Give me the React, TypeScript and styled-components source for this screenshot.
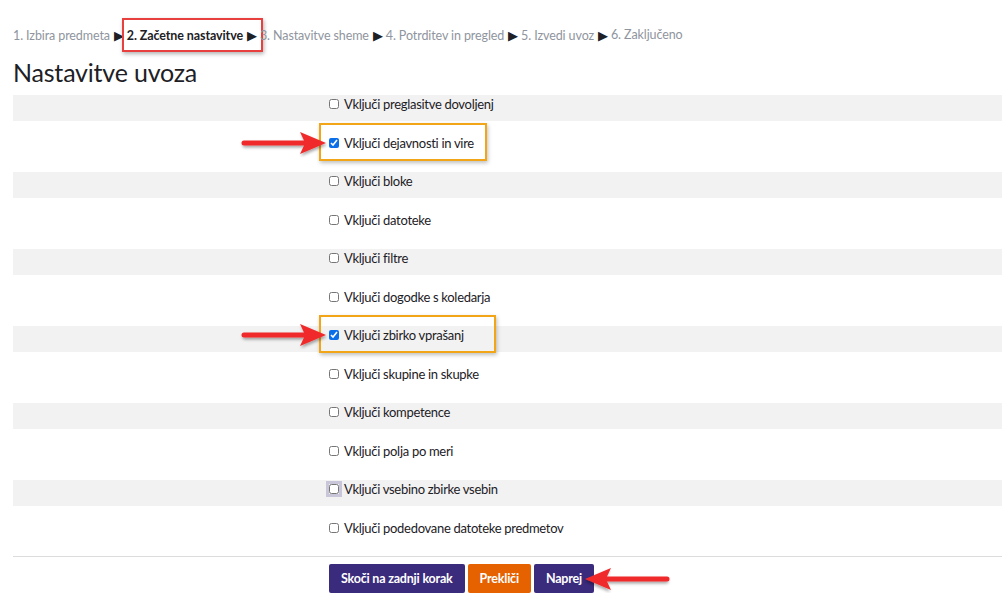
import React from 'react';
import styled, { createGlobalStyle } from 'styled-components';

const GlobalStyle = createGlobalStyle`
  body {
    margin: 0;
    background: #fff;
    font-family: Lato, "Noto Sans", sans-serif;
    color: #1d2125;
  }
`;

const STEPS = [
  { id: 1, label: '1. Izbira predmeta' },
  { id: 2, label: '2. Začetne nastavitve', active: true },
  { id: 3, label: '3. Nastavitve sheme' },
  { id: 4, label: '4. Potrditev in pregled' },
  { id: 5, label: '5. Izvedi uvoz' },
  { id: 6, label: '6. Zaključeno' },
];

const OPTIONS = [
  { id: 'permissions', label: 'Vključi preglasitve dovoljenj' },
  { id: 'activities', label: 'Vključi dejavnosti in vire', checked: true, mark: 168 },
  { id: 'blocks', label: 'Vključi bloke' },
  { id: 'files', label: 'Vključi datoteke' },
  { id: 'filters', label: 'Vključi filtre' },
  { id: 'calendar', label: 'Vključi dogodke s koledarja' },
  { id: 'questionbank', label: 'Vključi zbirko vprašanj', checked: true, mark: 177 },
  { id: 'groups', label: 'Vključi skupine in skupke' },
  { id: 'competencies', label: 'Vključi kompetence' },
  { id: 'customfield', label: 'Vključi polja po meri' },
  { id: 'contentbank', label: 'Vključi vsebino zbirke vsebin', focused: true },
  { id: 'legacyfiles', label: 'Vključi podedovane datoteke predmetov' },
];

const Arrow = ({ left }: { left?: boolean }) => (
  <ArrowSvg width="90" height="26" viewBox="0 0 90 26" $flip={left}>
    <defs>
      <filter id={left ? 'shl' : 'shr'} x="-20%" y="-40%" width="140%" height="180%">
        <feDropShadow dx="1" dy="2" stdDeviation="1.5" floodColor="#000" floodOpacity="0.35" />
      </filter>
    </defs>
    <path
      d="M4 10.5 H64 L60 2 L86 13 L60 24 L64 15.5 H4 Q1.5 15.5 1.5 13 Q1.5 10.5 4 10.5 Z"
      fill="#f02a2a"
      filter={`url(#${left ? 'shl' : 'shr'})`}
    />
  </ArrowSvg>
);

const App: React.FC = () => {
  return (
    <>
      <GlobalStyle />
      <Page>
        <Steps>
          {STEPS.map((step, i) => (
            <Step key={step.id} $active={step.active}>
              {step.label}
              {i < STEPS.length - 1 && <Triangle>▶</Triangle>}
              {step.active && <RedBox />}
            </Step>
          ))}
        </Steps>
        <Heading>Nastavitve uvoza</Heading>

        <Form>
          {OPTIONS.map((opt, i) => (
            <Row key={opt.id} $striped={i % 2 === 0}>
              <LabelCol />
              <Field>
                <Check type="checkbox" defaultChecked={opt.checked} $focused={opt.focused} id={opt.id} />
                <FieldLabel htmlFor={opt.id}>{opt.label}</FieldLabel>
                {opt.mark && (
                  <>
                    <OrangeBox style={{ width: opt.mark }} />
                    <RowArrow>
                      <Arrow />
                    </RowArrow>
                  </>
                )}
              </Field>
            </Row>
          ))}
        </Form>

        <Divider />

        <Actions>
          <LabelCol />
          <Buttons>
            <Button>Skoči na zadnji korak</Button>
            <Button $variant="cancel">Prekliči</Button>
            <NextWrap>
              <Button>Naprej</Button>
              <BackArrow>
                <Arrow left />
              </BackArrow>
            </NextWrap>
          </Buttons>
        </Actions>
      </Page>
    </>
  );
};

const Page = styled.div`
  padding: 0 0 0 13px;
  width: 989px;
`;

const Steps = styled.div`
  display: flex;
  align-items: center;
  height: 35px;
  padding-top: 17px;
  font-size: 12.5px;
  letter-spacing: -0.1px;
  color: #8f959e;
`;

const Step = styled.span<{ $active?: boolean }>`
  position: relative;
  white-space: pre;
  color: ${(p) => (p.$active ? '#1d2125' : '#8f959e')};
  font-weight: ${(p) => (p.$active ? 700 : 400)};
`;

const Triangle = styled.span`
  color: #1d2125;
  font-size: 13px;
  margin: 0 3px 0 4px;
  font-weight: 400;
`;

const RedBox = styled.span`
  position: absolute;
  left: -5px;
  right: -3px;
  top: -9px;
  bottom: -9px;
  border: 2px solid #e8403f;
  box-shadow: 1px 2px 4px rgba(0, 0, 0, 0.3);
  pointer-events: none;
`;

const Heading = styled.h2`
  margin: 5px 0 8px;
  font-size: 25px;
  font-weight: 400;
  line-height: 30px;
  letter-spacing: -0.2px;
  color: #1d2125;
`;

const Form = styled.div`
  display: flex;
  flex-direction: column;
`;

const Row = styled.div<{ $striped?: boolean }>`
  display: grid;
  grid-template-columns: 316px 1fr;
  height: 26px;
  margin-bottom: 12.5px;
  background: ${(p) => (p.$striped ? '#f2f2f2' : 'transparent')};
`;

const LabelCol = styled.div``;

const Field = styled.div`
  position: relative;
  display: flex;
  align-items: center;
  height: 18px;
`;

const Check = styled.input<{ $focused?: boolean }>`
  width: 10px;
  height: 10px;
  margin: 0 5px 0 0;
  accent-color: #0a6ee8;
  box-shadow: ${(p) => (p.$focused ? '0 0 0 3px #c9c6da' : 'none')};
`;

const FieldLabel = styled.label`
  font-size: 13px;
  letter-spacing: -0.3px;
  color: #1d2125;
`;

const OrangeBox = styled.span`
  position: absolute;
  left: -10px;
  top: -11px;
  height: 38px;
  box-sizing: border-box;
  border: 2px solid #f2a516;
  box-shadow: 1px 2px 4px rgba(0, 0, 0, 0.25);
  pointer-events: none;
`;

const RowArrow = styled.span`
  position: absolute;
  left: -89px;
  top: -4px;
  line-height: 0;
`;

const ArrowSvg = styled.svg<{ $flip?: boolean }>`
  display: block;
  overflow: visible;
  transform: ${(p) => (p.$flip ? 'scaleX(-1)' : 'none')};
`;

const Divider = styled.hr`
  margin: -1px 0 0;
  border: 0;
  border-top: 1px solid #dcdcdc;
`;

const Actions = styled.div`
  display: grid;
  grid-template-columns: 316px 1fr;
  padding-top: 7px;
`;

const Buttons = styled.div`
  display: flex;
  gap: 3px;
`;

const NextWrap = styled.div`
  position: relative;
  display: flex;
`;

const BackArrow = styled.span`
  position: absolute;
  left: 47px;
  top: 2px;
  line-height: 0;
`;

const Button = styled.button<{ $variant?: 'cancel' }>`
  height: 29px;
  margin: 0;
  padding: 0 12px;
  border: 0;
  border-radius: 2px;
  background: ${(p) => (p.$variant === 'cancel' ? '#e66100' : '#3b2b7d')};
  color: #fff;
  font-family: Lato, "Noto Sans", sans-serif;
  font-size: 12.5px;
  font-weight: 700;
  letter-spacing: -0.2px;
  cursor: pointer;
`;

export default App;
